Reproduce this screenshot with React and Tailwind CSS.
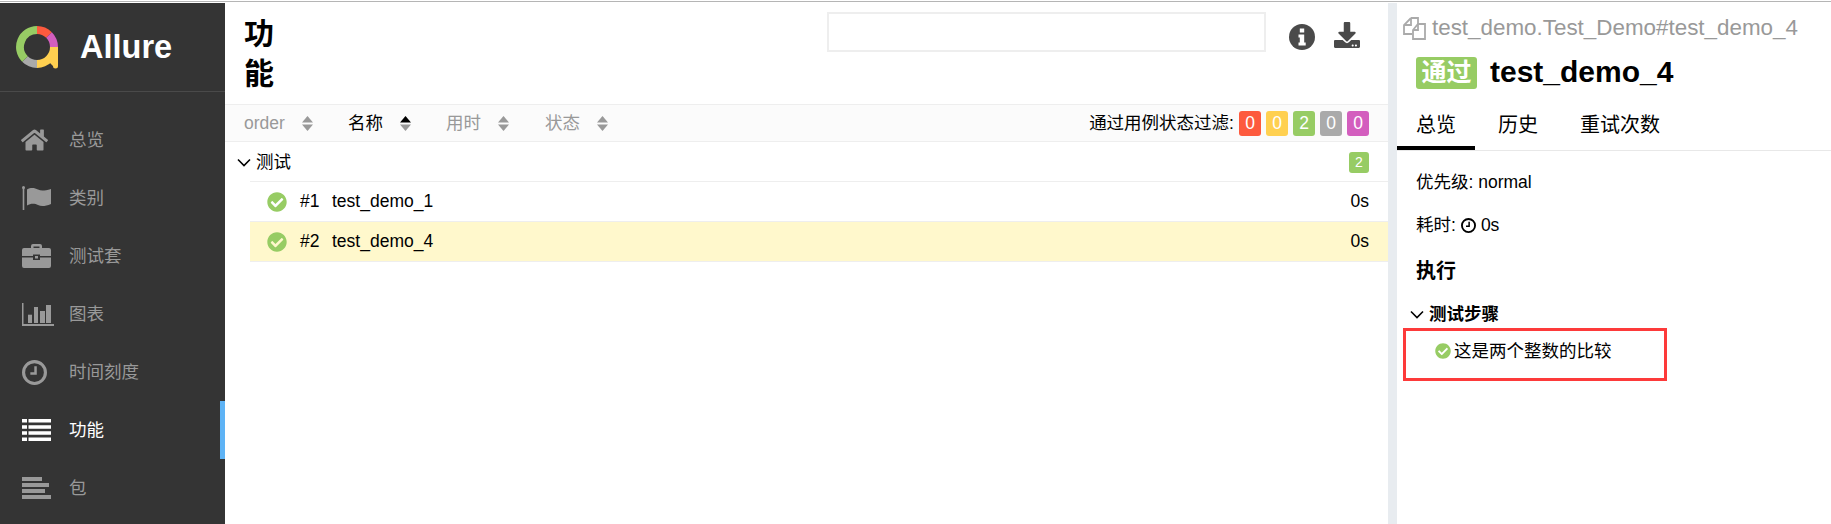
// App.jsx - Allure report, features page with test result pane
import React from 'react';
import { FaHome, FaDownload, FaCheckCircle } from 'react-icons/fa';

const fontStack = "font-['Liberation_Sans','Noto_Sans_CJK_SC',sans-serif]";

const FlagIcon = ({ className }) => (
  <svg viewBox="0 0 29 24" className={className} fill="currentColor">
    <circle cx="1.500" cy="1.500" r="1.500" />
    <rect x="0.700" y="2" width="1.600" height="22" />
    <path d="M5 3.500c4-2.500 8-1.500 11 0s6 1.500 13-.5v15c-6 2.500-10 2.500-13 1s-7-2-11 .5z" />
  </svg>
);

const BriefcaseIcon = ({ className }) => (
  <svg viewBox="0 0 29 24" className={className} fill="currentColor">
    <path d="M9 4V2a2 2 0 0 1 2-2h7a2 2 0 0 1 2 2v2h-2.500V2.500h-6V4z" />
    <path d="M2 4h25a2 2 0 0 1 2 2v6H18v-1.500h-7V12H0V6a2 2 0 0 1 2-2z" />
    <path d="M0 13.500h11V16h7v-2.500h11V22a2 2 0 0 1-2 2H2a2 2 0 0 1-2-2z" />
    <rect x="13" y="12" width="3" height="2.500" />
  </svg>
);

const ChartIcon = ({ className }) => (
  <svg viewBox="0 0 32 23" className={className} fill="currentColor">
    <path d="M0 0h1.500v21H32v2H0z" />
    <rect x="6" y="11.700" width="4" height="8.300" />
    <rect x="12" y="4" width="4" height="16" />
    <rect x="18" y="8" width="5" height="12" />
    <rect x="24" y="2" width="5" height="18" />
  </svg>
);

const ClockIcon = ({ className }) => (
  <svg viewBox="0 0 24 24" className={className} fill="none" stroke="currentColor">
    <circle cx="12" cy="12" r="10.500" strokeWidth="3" />
    <path d="M13 6v7H8" strokeWidth="2.400" />
  </svg>
);

const ListIcon = ({ className }) => (
  <svg viewBox="0 0 29 22" className={className} fill="currentColor">
    <path d="M0 0h5v3.500H0zM6.500 0H29v3.500H6.500zM0 6.200h5v3.500H0zM6.500 6.200H29v3.500H6.500zM0 12.300h5v3.500H0zM6.500 12.300H29v3.500H6.500zM0 18.500h5V22H0zM6.500 18.500H29V22H6.500z" />
  </svg>
);

const PackageIcon = ({ className }) => (
  <svg viewBox="0 0 29 22" className={className} fill="currentColor">
    <rect x="0" y="0" width="20" height="4" />
    <rect x="0" y="6" width="27" height="4" />
    <rect x="0" y="12" width="23" height="4" />
    <rect x="0" y="18" width="29" height="4" />
  </svg>
);

const InfoIcon = ({ className }) => (
  <svg viewBox="0 0 26 26" className={className}>
    <circle cx="13" cy="13" r="13" fill="currentColor" />
    <rect x="10.800" y="4.500" width="4.400" height="4" fill="#ffffff" />
    <path d="M9.500 10.500h5.700v8h1.500v3h-7.200v-3h1.300v-5H9.500z" fill="#ffffff" />
  </svg>
);

const CopyIcon = ({ className }) => (
  <svg viewBox="0 0 23 23" className={className} fill="none" stroke="currentColor" strokeWidth="1.800">
    <path d="M8 1h7v6M8 1L1 8v9h8" />
    <path d="M8 1v7H1" />
    <path d="M15 7h7v15H10v-9z" />
    <path d="M15 7v6h-5" />
  </svg>
);

const Logo = () => (
  <svg viewBox="0 0 44 44" className="w-[44px] h-[44px]" fill="none">
    <g strokeWidth="8">
      <path d="M21 5 A17 17 0 0 1 33 10" stroke="#fd5a3e" />
      <path d="M33 10 A17 17 0 0 1 38 22" stroke="#d35ebe" />
      <path d="M38 22 A17 17 0 0 1 21 39" stroke="#ffd050" />
      <path d="M21 39 A17 17 0 0 1 9 34" stroke="#aaaaaa" />
      <path d="M9 34 A17 17 0 0 1 21 5" stroke="#97cc64" />
    </g>
    <path d="M34 22h8v19a2.500 2.500 0 0 1-5 0l-3-3z" fill="#ffd050" />
  </svg>
);

const navItems = [
  { label: '总览', Icon: FaHome, cls: 'w-[27px] h-[24px] -ml-[1px]' },
  { label: '类别', Icon: FlagIcon, cls: 'w-[29px] h-[24px]' },
  { label: '测试套', Icon: BriefcaseIcon, cls: 'w-[29px] h-[24px]' },
  { label: '图表', Icon: ChartIcon, cls: 'w-[32px] h-[23px]' },
  { label: '时间刻度', Icon: ClockIcon, cls: 'w-[25px] h-[25px]' },
  { label: '功能', Icon: ListIcon, cls: 'w-[29px] h-[22px]', active: true },
  { label: '包', Icon: PackageIcon, cls: 'w-[29px] h-[22px]' },
];

const Sidebar = () => (
  <aside className="w-[225px] shrink-0 bg-[#343434] flex flex-col">
    <div className="h-[89px] shrink-0 border-b border-[#4a4a4a] flex items-center pl-[16px] gap-[20px]">
      <Logo />
      <span className="text-white font-bold text-[32.500px]">Allure</span>
    </div>
    <nav className="pt-[19px]">
      {navItems.map(({ label, Icon, cls, active }) => (
        <div
          key={label}
          className={`relative h-[58px] flex items-center pl-[22px] text-[17.5px] ${active ? 'text-white' : 'text-[#999999]'}`}
        >
          <span className="w-[47px] shrink-0 flex items-center">
            <Icon className={cls} />
          </span>
          <span>{label}</span>
          {active && <span className="absolute right-0 top-0 bottom-0 w-[5px] bg-[#5eb3f5]" />}
        </div>
      ))}
    </nav>
  </aside>
);

const SortIcon = ({ up }) => (
  <svg viewBox="0 0 11 15" className="w-[11px] h-[15px]">
    <path d="M5.500 0L11 6.500H0z" fill={up ? '#000000' : '#999999'} />
    <path d="M5.500 15L0 8.500h11z" fill="#999999" />
  </svg>
);

const Chevron = ({ className }) => (
  <svg viewBox="0 0 14 9" className={className} fill="none" stroke="currentColor" strokeWidth="1.600">
    <path d="M1 1.500l6 6 6-6" />
  </svg>
);

const sortCols = [
  { label: 'order', cls: 'w-[104px]' },
  { label: '名称', cls: 'w-[98px]', active: true },
  { label: '用时', cls: 'w-[99px]' },
  { label: '状态', cls: 'w-[99px]' },
];

const statusCounts = [
  { n: 0, cls: 'bg-[#fd5a3e]' },
  { n: 0, cls: 'bg-[#ffd050]' },
  { n: 2, cls: 'bg-[#97cc64]' },
  { n: 0, cls: 'bg-[#aaaaaa]' },
  { n: 0, cls: 'bg-[#d35ebe]' },
];

const TestRow = ({ num, name, active }) => (
  <div className={`h-[40px] ml-[25px] pl-[17px] pr-[19px] flex items-center border-b border-[#eeeeee] ${active ? 'bg-[#fff8cc]' : ''}`}>
    <FaCheckCircle className="w-[20px] h-[20px] text-[#97cc64] shrink-0" />
    <span className="ml-[13px] w-[32px]">#{num}</span>
    <span>{name}</span>
    <span className="ml-auto">0s</span>
  </div>
);

const MainPane = () => (
  <main className="w-[1163px] shrink-0 flex flex-col">
    <div className="h-[101px] shrink-0 flex pl-[19px] pr-[27px]">
      <h1 className="w-[36px] pt-[11px] text-[30px] leading-[40px] font-bold text-black">功能</h1>
      <div className="ml-auto flex">
        <div className="w-[439px] h-[40px] mt-[9px] border-2 border-[#eeeeee]" />
        <InfoIcon className="w-[26px] h-[26px] mt-[21px] ml-[23px] text-[#4a4a4a]" />
        <FaDownload className="w-[28px] h-[26px] mt-[19px] ml-[18px] text-[#4a4a4a]" />
      </div>
    </div>
    <div className="h-[36px] shrink-0 bg-[#fbfbfb] border-y border-[#eeeeee] box-content flex items-center pl-[19px] pr-[19px]">
      {sortCols.map(({ label, cls, active }) => (
        <div key={label} className={`${cls} flex items-center gap-[17px] ${active ? 'text-black' : 'text-[#999999]'}`}>
          <span>{label}</span>
          <SortIcon up={active} />
        </div>
      ))}
      <div className="ml-auto flex items-center">
        <span className="mr-[5px]">通过用例状态过滤:</span>
        <div className="flex gap-[5px]">
          {statusCounts.map(({ n, cls }, i) => (
            <span key={i} className={`w-[22px] h-[25px] rounded-[3px] text-white text-center leading-[25px] ${cls}`}>{n}</span>
          ))}
        </div>
      </div>
    </div>
    <div className="h-[40px] shrink-0 flex items-center pl-[12px] pr-[19px] relative">
      <Chevron className="w-[14px] h-[9px] mr-[5px]" />
      <span>测试</span>
      <span className="ml-auto w-[20px] h-[21px] rounded-[3px] bg-[#97cc64] text-white text-[14px] text-center leading-[21px]">2</span>
      <span className="absolute left-[25px] right-0 bottom-0 h-px bg-[#eeeeee]" />
    </div>
    <TestRow num={1} name="test_demo_1" />
    <TestRow num={2} name="test_demo_4" active />
  </main>
);

const DetailPane = () => (
  <section className="flex-1 min-w-0 border-l-[9px] border-[#e8ecf0]">
    <div className="h-[42px] pl-[6px] pt-[8px] flex items-center text-[22.400px] text-[#999999]">
      <CopyIcon className="w-[23px] h-[23px] mr-[6px] text-[#aaaaaa]" />
      <span>test_demo.Test_Demo#test_demo_4</span>
    </div>
    <div className="h-[56px] pl-[19px] flex items-center">
      <span className="w-[61px] h-[32px] rounded-[3px] bg-[#97cc64] text-white text-[25px] font-bold text-center leading-[31px]">通过</span>
      <span className="ml-[13px] pb-[3px] text-[30px] font-bold text-black">test_demo_4</span>
    </div>
    <div className="h-[50px] flex items-end gap-[4px] border-b border-[#e8e8e8]">
      {['总览', '历史', '重试次数'].map((t, i) => (
        <div key={t} className={`px-[19px] h-[40px] text-[20px] ${i === 0 ? 'border-b-4 border-black' : ''}`}>{t}</div>
      ))}
    </div>
    <div className="pl-[19px] pt-[19px]">
      <div className="h-[24px] leading-[24px]">优先级: normal</div>
      <div className="h-[24px] leading-[24px] mt-[19px] flex items-center">
        耗时:<ClockIcon className="w-[15px] h-[15px] mx-[5px] text-black" />0s
      </div>
      <div className="mt-[19px] text-[20px] font-bold text-black">执行</div>
      <div className="mt-[15px] -ml-[6px] flex items-center font-bold">
        <Chevron className="w-[14px] h-[9px] mr-[5px] text-black" />
        <span className="text-[17.5px]">测试步骤</span>
      </div>
      <div className="mt-[1px] -ml-[13px] w-[264px] h-[53px] border-[3px] border-[#fd3a3a] pl-[29px] pt-[7px] flex items-start">
        <FaCheckCircle className="w-[16px] h-[16px] mt-[5px] mr-[3px] text-[#97cc64] shrink-0" />
        <span>这是两个整数的比较</span>
      </div>
    </div>
  </section>
);

export default function App() {
  return (
    <div className={`${fontStack} w-[1831px] h-[524px] overflow-hidden bg-white text-[17.5px] text-black flex flex-col`}>
      <div className="h-[3px] shrink-0 border-t border-b-[1px] border-t-white border-b-white bg-[#b5b5b5]" />
      <div className="flex flex-1 min-h-0">
        <Sidebar />
        <MainPane />
        <DetailPane />
      </div>
    </div>
  );
}
